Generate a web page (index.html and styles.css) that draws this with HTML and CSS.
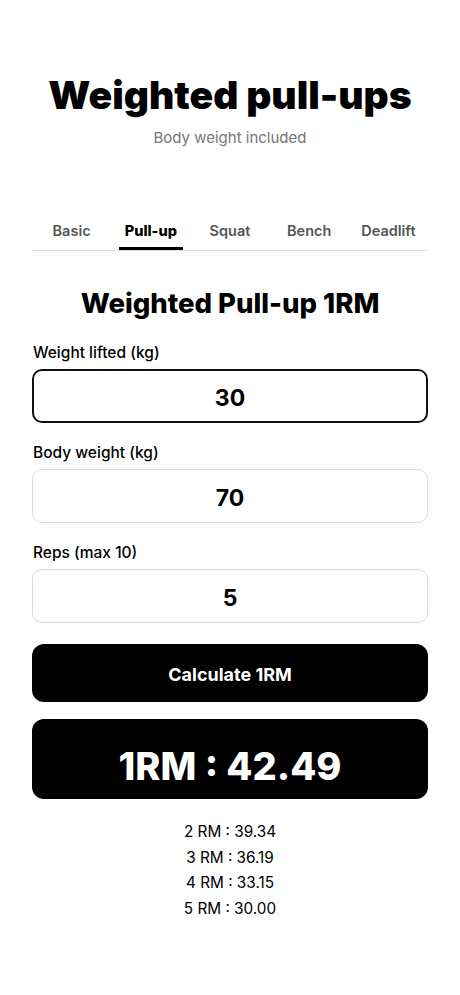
FILE: index.html
```html
<!DOCTYPE html>
<html lang="en">
<head>
    <meta charset="UTF-8">
    <meta name="viewport" content="width=device-width, initial-scale=1.0">
    <link rel="stylesheet" href="styles.css">
    <title>Weighted pull-ups</title>
</head>
<body>
    <header class="top">
        <h1>Weighted pull-ups</h1>
        <p class="sub">Body weight included</p>
    </header>

    <main>
        <nav class="tabs">
            <a class="tab"><span>Basic</span></a>
            <a class="tab active"><span>Pull-up</span></a>
            <a class="tab"><span>Squat</span></a>
            <a class="tab"><span>Bench</span></a>
            <a class="tab"><span>Deadlift</span></a>
        </nav>

        <section class="calc">
            <h2>Weighted Pull-up 1RM</h2>

            <label for="weight">Weight lifted (kg)</label>
            <input type="text" id="weight" class="field focus" value="30">

            <label for="body">Body weight (kg)</label>
            <input type="text" id="body" class="field" value="70">

            <label for="reps">Reps (max 10)</label>
            <input type="text" id="reps" class="field" value="5">

            <button class="go">Calculate 1RM</button>

            <div class="result">1RM : 42.49</div>

            <ul class="rm-list">
                <li>2 RM : 39.34</li>
                <li>3 RM : 36.19</li>
                <li>4 RM : 33.15</li>
                <li>5 RM : 30.00</li>
            </ul>
        </section>
    </main>
</body>
</html>
```

FILE: styles.css
```css
body {
    font-family: 'Inter', 'Liberation Sans', sans-serif;
    background-color: #fff;
    color: #000;
    margin: 0;
    padding: 0;
}

.top {
    text-align: center;
    padding-top: 71px;
}

h1 {
    font-size: 39px;
    font-weight: 900;
    margin: 0;
    line-height: 48px;
}

.sub {
    font-size: 15px;
    line-height: 18px;
    color: #777;
    margin: 10px 0 0;
}

main {
    padding: 0 32px;
}

.tabs {
    display: flex;
    margin-top: 71px;
    border-bottom: 1px solid #ddd;
}

.tab {
    flex: 1;
    text-align: center;
    font-size: 14.5px;
    line-height: 18px;
    font-weight: 600;
    color: #555;
    padding-top: 4px;
}

.tab span {
    display: inline-block;
    padding: 0 6px 10px;
}

.tab.active {
    color: #000;
    font-weight: 800;
}

.tab.active span {
    padding-bottom: 7px;
    border-bottom: 3px solid #000;
}

.calc {
    display: flex;
    flex-direction: column;
}

h2 {
    font-size: 27.5px;
    line-height: 34px;
    font-weight: 800;
    text-align: center;
    margin: 35px 0 24px;
}

label {
    font-size: 15.5px;
    line-height: 18px;
    font-weight: 500;
    margin: 0 0 7px 1px;
}

.field {
    font-family: inherit;
    height: 54px;
    box-sizing: border-box;
    padding-top: 4px;
    border: 1px solid #ddd;
    border-radius: 10px;
    text-align: center;
    font-size: 23px;
    font-weight: 700;
    color: #000;
    margin-bottom: 21px;
    outline: none;
}

.field.focus {
    border: 2px solid #111;
}

.go {
    font-family: inherit;
    height: 58px;
    padding-top: 4px;
    background-color: #000;
    color: #fff;
    border: none;
    border-radius: 12px;
    font-size: 18px;
    font-weight: 700;
}

.result {
    margin-top: 17px;
    height: 80px;
    box-sizing: border-box;
    padding-top: 13px;
    background-color: #000;
    color: #fff;
    border-radius: 12px;
    display: flex;
    align-items: center;
    justify-content: center;
    font-size: 38px;
    font-weight: 800;
}

.rm-list {
    list-style: none;
    padding: 0;
    margin: 20px 0 0;
    text-align: center;
    font-size: 15.3px;
    line-height: 25.5px;
}
```
